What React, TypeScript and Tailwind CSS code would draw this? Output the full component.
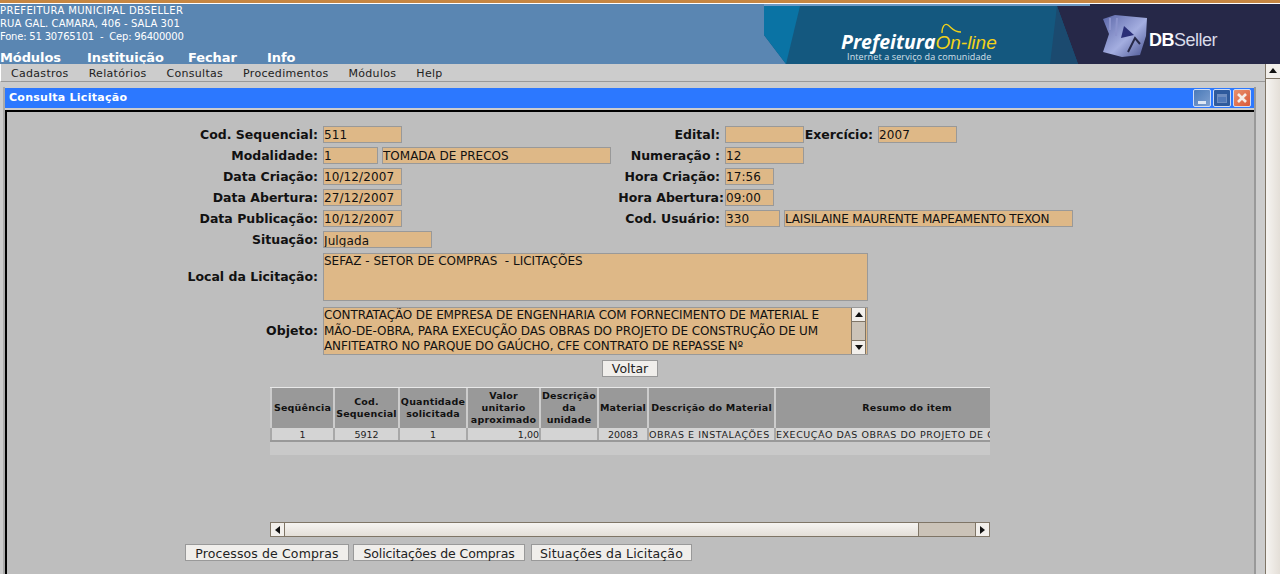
import React from 'react';

const FONT = "font-['DejaVu_Sans',sans-serif]";

const Field = ({ w, children, clip, track = 'tracking-[0.1px]' }: { w: string; children?: React.ReactNode; clip?: boolean; track?: string }) => (
  <div className={`${w} ${track} h-[17px] shrink-0 bg-[#deb887] border border-[#999999] overflow-hidden text-[12px] text-[#111] whitespace-pre ${clip ? 'leading-[19px]' : 'leading-[17px]'}`}>
    {children}
  </div>
);

const Label = ({ w, children, pr = 'pr-[5px]' }: { w: string; children: React.ReactNode; pr?: string }) => (
  <div className={`${w} ${pr} pt-px shrink-0 text-right font-bold text-[12.5px] text-[#111] whitespace-nowrap`}>{children}</div>
);

const Row = ({ children }: { children: React.ReactNode }) => <div className="flex items-center h-[21px]">{children}</div>;

const Arrow = ({ dir }: { dir: 'up' | 'down' | 'left' | 'right' }) => {
  const pts = { up: '4,1 8,6 0,6', down: '0,1 8,1 4,6', left: '6,0 6,8 1,4', right: '1,0 1,8 6,4' }[dir];
  return (
    <svg width="8" height="8" viewBox="0 0 8 8">
      <polygon points={pts} fill="#111" />
    </svg>
  );
};

const columns = [
  { w: 'w-[63px]', head: 'Seqüência', cell: '1', align: 'text-center' },
  { w: 'w-[65px]', head: 'Cod. Sequencial', cell: '5912', align: 'text-center' },
  { w: 'w-[68px]', head: 'Quantidade solicitada', cell: '1', align: 'text-center' },
  { w: 'w-[73px]', head: 'Valor unitario aproximado', cell: '1,00', align: 'text-right' },
  { w: 'w-[58px]', head: 'Descrição da unidade', cell: '', align: 'text-center' },
  { w: 'w-[50px]', head: 'Material', cell: '20083', align: 'text-center' },
  { w: 'w-[127px]', head: 'Descrição do Material', cell: 'OBRAS E INSTALAÇÕES', align: 'text-left tracking-[0.55px]' },
  { w: 'w-[264px]', head: 'Resumo do item', cell: 'EXECUÇÃO DAS OBRAS DO PROJETO DE CONSTRUÇÃO', align: 'text-left tracking-[0.55px]' },
];

const Banner = () => (
  <div className="relative w-[516px] h-[60px] shrink-0 overflow-hidden">
    <svg className="absolute inset-0" width="516" height="60" viewBox="0 4 516 60">
      <rect x="0" y="4" width="326" height="2" fill="#6f9ac4" />
      <polygon points="0,6 326,6 326,4 516,4 516,64 22,64 0,35" fill="#14587f" />
      <polygon points="0,6 36,6 22,64 0,35" fill="#0a73a4" />
      <polygon points="293,6 326,6 326,4 516,4 516,64 314,64" fill="#262848" />
      <polygon points="293,6 314,64 286,64" fill="#1b4a6f" />
      <defs>
        <linearGradient id="cube" x1="0" y1="0" x2="1" y2="1">
          <stop offset="0" stopColor="#5b66a8" />
          <stop offset="0.55" stopColor="#a4aee0" />
          <stop offset="1" stopColor="#46508f" />
        </linearGradient>
      </defs>
      <polygon points="339,19 351,15 383,18 382,36 376,55 358,57 339,52 345,34" fill="url(#cube)" />
      <polygon points="360,26 370,35 357,38" fill="#2a2f78" />
      <path d="M364 52 L371 38 L376 44" stroke="#262848" strokeWidth="2" fill="none" />
      <path d="M346 18 L346 30 M353 18 L352 36" stroke="#8b93cc" strokeWidth="2" fill="none" />
      <path d="M178 33 C178 26 181 23 184 25 C188 28 189 32 197 32" stroke="#f2d21a" strokeWidth="1.3" fill="none" />
    </svg>
    <div className="absolute left-[77px] top-[30px] flex items-baseline font-['Open_Sans',sans-serif] italic text-[19.5px] leading-[16px]">
      <span className="font-bold text-white">Prefeitura</span>
      <span className="text-[#f2d21a] font-['Liberation_Sans',sans-serif] text-[19px]">On-line</span>
    </div>
    <div className="absolute left-[83px] top-[46px] font-['Open_Sans',sans-serif] text-[9px] leading-[13px] tracking-[0.12px] text-[#d6e0ea] whitespace-nowrap">
      Internet a serviço da comunidade
    </div>
    <div className="absolute left-[385px] top-[26px] font-['Liberation_Sans',sans-serif] text-[18px] leading-[20px] tracking-[-0.5px] text-[#d9dbe8]">
      <span className="font-bold text-white">DB</span>Seller
    </div>
  </div>
);

const WinButton = ({ bg, children }: { bg: string; children: React.ReactNode }) => (
  <div className={`w-[18px] h-[18px] rounded-[2px] border border-[#cfdcf5] flex items-center justify-center ${bg}`}>{children}</div>
);

export default function App() {
  return (
    <div className={`${FONT} w-[1280px] h-[574px] overflow-hidden bg-[#cccccc] flex flex-col`}>
      <div className="h-[3px] bg-[#c68642] shrink-0" />
      <div className="h-px bg-white shrink-0" />
      <header className="h-[60px] shrink-0 flex justify-between bg-[#5a86b2] text-white">
        <div className="flex flex-col">
          <div className="text-[10px] leading-[13px] whitespace-pre">
            <div className="tracking-[0.35px]">PREFEITURA MUNICIPAL DBSELLER</div>
            <div className="tracking-[0.09px]">RUA GAL. CAMARA, 406 - SALA 301</div>
            <div className="tracking-[-0.2px]">Fone: 51 30765101  -  Cep: 96400000</div>
          </div>
          <nav className="flex font-bold text-[13px] leading-[16px] tracking-[-0.1px] mt-[7px]">
            <span className="w-[87px]">Módulos</span>
            <span className="w-[101px]">Instituição</span>
            <span className="w-[79px]">Fechar</span>
            <span>Info</span>
          </nav>
        </div>
        <Banner />
      </header>

      <div className="flex flex-1 min-h-0">
        <main className="w-[1265px] shrink-0 flex flex-col">
          <div className="h-[18px] shrink-0 border-l border-l-white border-b border-b-[#999999] bg-[#cccccc] flex items-center gap-5 pl-[10px] pt-[3px] text-[11px] tracking-[0.3px] text-[#222]">
            <span>Cadastros</span>
            <span>Relatórios</span>
            <span>Consultas</span>
            <span>Procedimentos</span>
            <span>Módulos</span>
            <span>Help</span>
          </div>

          <section className="ml-[3px] mt-[5px] w-[1253px] flex-1 min-h-0 flex flex-col border-l-2 border-l-[#aaaaaa] border-r-2 border-r-[#999999]">
            <div className="h-[20px] shrink-0 mt-px bg-[#2c78ff] flex items-center justify-between pl-1 pr-[3px] text-white font-bold text-[11px] tracking-[0.27px]">
              <span className="pt-px">Consulta Licitação</span>
              <div className="flex gap-[2px]">
                <WinButton bg="bg-gradient-to-br from-[#4a7ab8] to-[#7fa0d0]"><div className="w-2 h-[3px] bg-[#dfe8f5] mt-2" /></WinButton>
                <WinButton bg="bg-[#2f5a9c]"><div className="w-[10px] h-[9px] border border-[#6d8cc0] border-t-[3px] bg-[#5078b8]" /></WinButton>
                <WinButton bg="bg-gradient-to-br from-[#e8906a] to-[#d8583a]">
                  <svg width="12" height="12" viewBox="0 0 12 12"><path d="M2 2 L10 10 M10 2 L2 10" stroke="#f5ede8" strokeWidth="2.6" /></svg>
                </WinButton>
              </div>
            </div>

            <div className="flex-1 min-h-0 mt-[2px] border-t-2 border-l-2 border-t-black border-l-black bg-[#bebebe] pt-3 flex flex-col text-[#111] relative">
              <Row>
                <Label w="w-[316px]">Cod. Sequencial:</Label>
                <Field w="w-[79px]">511</Field>
                <Label w="w-[323px]">Edital:</Label>
                <Field w="w-[79px]" />
                <Label w="w-[74px]">Exercício:</Label>
                <Field w="w-[79px]">2007</Field>
              </Row>
              <Row>
                <Label w="w-[316px]">Modalidade:</Label>
                <Field w="w-[55px]">1</Field>
                <div className="w-1 shrink-0" />
                <Field w="w-[229px]" track="tracking-[0px]">TOMADA DE PRECOS</Field>
                <Label w="w-[114px]">Numeração :</Label>
                <Field w="w-[79px]">12</Field>
              </Row>
              <Row>
                <Label w="w-[316px]">Data Criação:</Label>
                <Field w="w-[79px]">10/12/2007</Field>
                <Label w="w-[323px]">Hora Criação:</Label>
                <Field w="w-[49px]">17:56</Field>
              </Row>
              <Row>
                <Label w="w-[316px]">Data Abertura:</Label>
                <Field w="w-[79px]">27/12/2007</Field>
                <Label w="w-[323px]" pr="pr-[1px]">Hora Abertura:</Label>
                <Field w="w-[49px]">09:00</Field>
              </Row>
              <Row>
                <Label w="w-[316px]">Data Publicação:</Label>
                <Field w="w-[79px]">10/12/2007</Field>
                <Label w="w-[323px]">Cod. Usuário:</Label>
                <Field w="w-[55px]">330</Field>
                <div className="w-1 shrink-0" />
                <Field w="w-[289px]" track="tracking-[-0.15px]">LAISILAINE MAURENTE MAPEAMENTO TEXON</Field>
              </Row>
              <Row>
                <Label w="w-[316px]">Situação:</Label>
                <Field w="w-[109px]" clip>Julgada</Field>
              </Row>

              <div className="flex items-center mt-[3px]">
                <Label w="w-[316px]">Local da Licitação:</Label>
                <div className="w-[545px] h-[48px] bg-[#deb887] border border-[#999999] text-[12px] leading-[15px] whitespace-pre">
                  SEFAZ - SETOR DE COMPRAS  - LICITAÇÕES
                </div>
              </div>

              <div className="flex items-center mt-[6px]">
                <Label w="w-[316px]">Objeto:</Label>
                <div className="w-[545px] h-[48px] bg-[#deb887] border border-[#999999] flex">
                  <div className="flex-1 text-[12px] leading-[15.5px] tracking-[-0.12px] whitespace-pre overflow-hidden">
                    {'CONTRATAÇÃO DE EMPRESA DE ENGENHARIA COM FORNECIMENTO DE MATERIAL E\nMÃO-DE-OBRA, PARA EXECUÇÃO DAS OBRAS DO PROJETO DE CONSTRUÇÃO DE UM\nANFITEATRO NO PARQUE DO GAÚCHO, CFE CONTRATO DE REPASSE Nº'}
                  </div>
                  <div className="w-[15px] mr-px shrink-0 flex flex-col border-x border-[#7f7566] bg-[#f2efeb]">
                    <div className="h-[14px] flex items-center justify-center border-b border-[#7f7566]"><Arrow dir="up" /></div>
                    <div className="flex-1 bg-[#cbc3b8]" />
                    <div className="h-[14px] flex items-center justify-center border-t border-[#7f7566]"><Arrow dir="down" /></div>
                  </div>
                </div>
              </div>

              <div className="flex justify-center w-[1246px] mt-[5px]">
                <button className="w-[56px] h-[17px] bg-[#f0eeeb] border border-[#999999] text-[12.5px] leading-[15px] text-[#222]">Voltar</button>
              </div>

              {/* grid */}
              <div className="ml-[263px] mt-[10px] w-[720px] h-[135px] flex flex-col overflow-hidden">
                <div className="h-px bg-[#e8e8e8]" />
                <div className="flex h-[40px] bg-[#999999]">
                  {columns.map(c => (
                    <div key={c.head} className={`${c.w} shrink-0 border-l-2 border-l-[#cccccc] flex items-center justify-center text-center font-bold text-[9.5px] leading-[12px] tracking-[0.2px] text-[#111] whitespace-normal overflow-hidden`}>
                      {c.head}
                    </div>
                  ))}
                </div>
                <div className="flex h-[14px] bg-[#d4d4d4] border-b-2 border-b-[#999999]">
                  {columns.map(c => (
                    <div key={c.head} className={`${c.w} shrink-0 border-l-2 border-l-[#a8a8a8] ${c.align} text-[9.5px] leading-[14px] text-[#222] whitespace-nowrap overflow-hidden`}>
                      {c.cell}
                    </div>
                  ))}
                </div>
                <div className="h-[13px] bg-[#c9c9c9]" />
                <div className="flex-1" />
              </div>

              <div className="ml-[263px] w-[720px] h-[15px] flex border border-[#7f7566] bg-[#cbc3b8]">
                <div className="w-[14px] shrink-0 bg-[#f2efeb] border-r border-[#7f7566] flex items-center justify-center"><Arrow dir="left" /></div>
                <div className="w-[634px] shrink-0 border-r border-[#7f7566] bg-gradient-to-b from-[#f6f4f1] to-[#e4dfd8] flex items-center justify-center">
                  <div className="w-3 h-[8px] bg-[radial-gradient(#c8c4bc_40%,transparent_45%)] bg-[length:2px_2px]" />
                </div>
                <div className="flex-1" />
                <div className="w-[14px] shrink-0 bg-[#f2efeb] border-l border-[#7f7566] flex items-center justify-center"><Arrow dir="right" /></div>
              </div>

              <div className="ml-[178px] mt-[7px] flex gap-1 text-[12.5px] text-[#222]">
                <button className="w-[164px] h-[17px] bg-[#f0eeeb] border border-[#999999] leading-[16px] pt-px tracking-[0.12px]">Processos de Compras</button>
                <button className="w-[172px] h-[17px] bg-[#f0eeeb] border border-[#999999] leading-[16px] pt-px tracking-[-0.1px]">Solicitações de Compras</button>
                <button className="w-[161px] h-[17px] ml-[2px] bg-[#f0eeeb] border border-[#999999] leading-[16px] pt-px tracking-[0.15px]">Situações da Licitação</button>
              </div>
            </div>
          </section>
        </main>

        <aside className="w-[15px] shrink-0 flex flex-col border-l border-[#7f7566] bg-gradient-to-r from-[#f6f4f1] to-[#e4dfd8]">
          <div className="h-[15px] bg-[#f2efeb] border-b border-[#7f7566] flex items-center justify-center"><Arrow dir="up" /></div>
        </aside>
      </div>
    </div>
  );
}
